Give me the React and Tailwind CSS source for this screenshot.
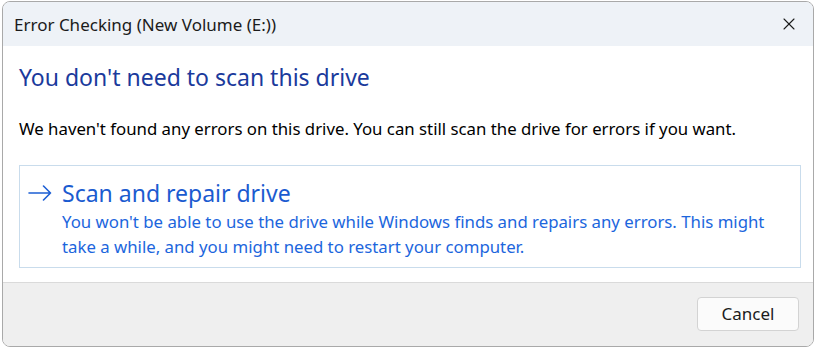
import { X } from 'lucide-react';

const font = { fontFamily: '"Segoe UI", "Noto Sans", sans-serif' };

export default function App() {
  return (
    <div className="w-[816px] h-[348px] bg-white pt-px pl-[2px]" style={font}>
      <div className="w-[812px] h-[346px] flex flex-col border border-[#a9a9a9] rounded-lg overflow-hidden bg-white">
        {/* title bar */}
        <div className="h-[44px] shrink-0 bg-[#eef2f7] flex items-center justify-between pl-[11px] pr-[14px]">
          <span className="text-[17px] text-[#1b1b1b] mt-[2px]">Error Checking (New Volume (E:))</span>
          <X className="w-[20px] h-[20px] text-[#1b1b1b]" strokeWidth={1.3} />
        </div>

        {/* content */}
        <div className="flex-1 flex flex-col px-[16px]">
          <h1 className="text-[23px] leading-[30px] text-[#1a3a9c] mt-[16px]">You don't need to scan this drive</h1>
          <p className="text-[16.8px] leading-[22px] text-black mt-[26px]">
            We haven't found any errors on this drive. You can still scan the drive for errors if you want.
          </p>
          <div className="mt-[25px] w-[782px] h-[103px] border border-[#c9dcec] flex pl-[8px] pt-[12px]">
            <svg width="24" height="16" viewBox="0 0 24 16" className="mt-[7px] shrink-0 text-[#1d5fd4]" fill="none" stroke="currentColor" strokeWidth="1.6" strokeLinecap="round" strokeLinejoin="round">
              <path d="M1 8h21.5M15.5 1l7 7-7 7" />
            </svg>
            <div className="ml-[10px] text-[#1c66dd]">
              <div className="text-[23px] leading-[30px] text-[#1b5bd0]">Scan and repair drive</div>
              <div className="text-[16.8px] leading-[25px] mt-[1px]">
                You won't be able to use the drive while Windows finds and repairs any errors. This might<br />
                take a while, and you might need to restart your computer.
              </div>
            </div>
          </div>
        </div>

        {/* footer */}
        <div className="h-[64px] shrink-0 bg-[#efefef] border-t border-[#dadada] flex items-center justify-end pr-[14px]">
          <button className="w-[102px] h-[34px] bg-[#fbfbfb] border border-[#d3d3d3] rounded-[4px] text-[17px] text-[#1b1b1b] mt-[-1px]">
            Cancel
          </button>
        </div>
      </div>
    </div>
  );
}
